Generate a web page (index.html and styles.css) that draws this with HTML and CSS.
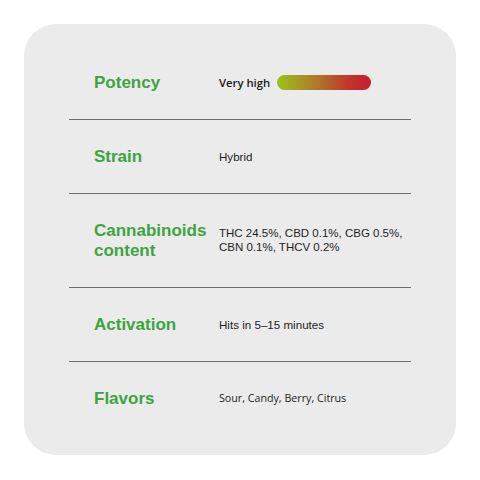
FILE: index.html
```html
<!DOCTYPE html>
<html>
<head>
<meta charset="utf-8">
<link rel="stylesheet" href="styles.css">
</head>
<body>
<div class="card">
  <div class="row">
    <div class="label">Potency</div>
    <div class="value potency">
      <span class="level">Very high</span>
      <span class="bar"></span>
    </div>
  </div>
  <div class="row">
    <div class="label">Strain</div>
    <div class="value">Hybrid</div>
  </div>
  <div class="row">
    <div class="label">Cannabinoids<br>content</div>
    <div class="value multi">THC 24.5%, CBD 0.1%, CBG 0.5%,<br>CBN 0.1%, THCV 0.2%</div>
  </div>
  <div class="row">
    <div class="label">Activation</div>
    <div class="value">Hits in 5–15 minutes</div>
  </div>
  <div class="row last">
    <div class="label">Flavors</div>
    <div class="value flavors">Sour, Candy, Berry, Citrus</div>
  </div>
</div>
</body>
</html>
```
FILE: styles.css
```css
html, body {
  margin: 0;
  padding: 0;
  background: #ffffff;
}
body {
  padding: 24px;
  width: 480px;
  height: 480px;
  box-sizing: border-box;
}
.card {
  width: 432px;
  height: 431px;
  box-sizing: border-box;
  background: #ebebeb;
  border-radius: 32px;
  padding: 22px 45px 0 45px;
}
.row {
  display: flex;
  align-items: center;
  padding: 26.5px 0 26.5px 25px;
  border-bottom: 1px solid #6e6e6e;
}
.row.last {
  border-bottom: none;
}
.label {
  width: 125px;
  flex: none;
  font-family: "Liberation Sans", Arial, sans-serif;
  font-weight: bold;
  font-size: 17px;
  line-height: 20px;
  color: #3da53f;
}
.value {
  font-family: "Liberation Sans", Arial, sans-serif;
  font-size: 11.6px;
  line-height: 13.5px;
  color: #1e1e1e;
}
.value.multi {
  font-size: 11.5px;
}
.potency {
  display: flex;
  align-items: center;
  gap: 7px;
}
.level {
  font-family: "Open Sans", sans-serif;
  font-weight: 600;
  font-size: 11.3px;
  color: #1a1a1a;
}
.bar {
  display: block;
  width: 94px;
  height: 15px;
  border-radius: 8px;
  background: linear-gradient(90deg, #9bc21d 0%, #b0742a 45%, #c1372b 75%, #c41e2c 100%);
}
.flavors {
  font-family: "Open Sans", sans-serif;
  font-size: 10.7px;
}
```
